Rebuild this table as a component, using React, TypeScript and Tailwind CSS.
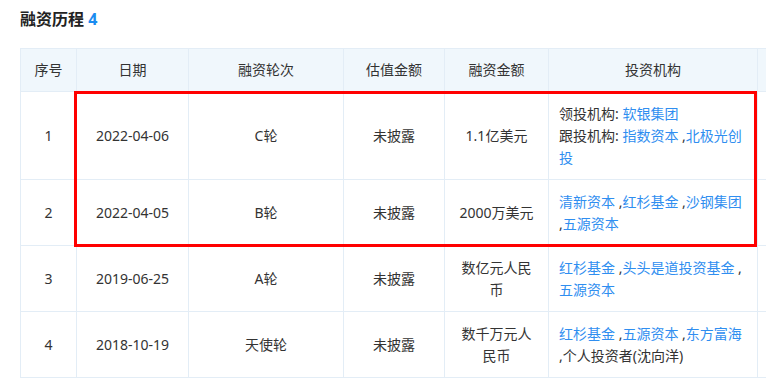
import React from "react";

type Inv = { text: string; link: boolean };

const Link = ({ children }: { children: React.ReactNode }) => (
  <span className="text-[#2f8ef0]">{children}</span>
);

const list = (items: Inv[]) =>
  items.map((it, i) => (
    <React.Fragment key={i}>
      {i > 0 ? " ," : ""}
      {it.link ? <Link>{it.text}</Link> : <span>{it.text}</span>}
    </React.Fragment>
  ));

const data = [
  {
    no: "1",
    date: "2022-04-06",
    round: "C轮",
    val: "未披露",
    amount: "1.1亿美元",
    inv: (
      <>
        <div>
          领投机构: <Link>软银集团</Link>
        </div>
        <div>
          跟投机构: {list([
            { text: "指数资本", link: true },
            { text: "北极光创投", link: true },
          ])}
        </div>
      </>
    ),
  },
  {
    no: "2",
    date: "2022-04-05",
    round: "B轮",
    val: "未披露",
    amount: "2000万美元",
    inv: list([
      { text: "清新资本", link: true },
      { text: "红杉基金", link: true },
      { text: "沙钢集团", link: true },
      { text: "五源资本", link: true },
    ]),
  },
  {
    no: "3",
    date: "2019-06-25",
    round: "A轮",
    val: "未披露",
    amount: "数亿元人民币",
    inv: list([
      { text: "红杉基金", link: true },
      { text: "头头是道投资基金", link: true },
      { text: "五源资本", link: true },
    ]),
  },
  {
    no: "4",
    date: "2018-10-19",
    round: "天使轮",
    val: "未披露",
    amount: "数千万元人民币",
    inv: list([
      { text: "红杉基金", link: true },
      { text: "五源资本", link: true },
      { text: "东方富海", link: true },
      { text: "个人投资者(沈向洋)", link: false },
    ]),
  },
];

export default function App() {
  const td =
    "border border-[#e3edf6] py-[10.5px] px-[10px] text-center align-middle";
  const th =
    "border border-[#e3edf6] py-[10px] px-[10px] text-center font-normal";
  return (
    <div
      className="w-[766px] h-[387px] overflow-hidden bg-white text-[#333] text-[14px] leading-[22px]"
      style={{ fontFamily: '"Noto Sans", "Noto Sans CJK SC", sans-serif' }}
    >
      <div className="pl-[20px] pt-[7px]">
        <div className="h-[24px] leading-[24px] text-[16px] font-bold text-[#222] mb-[17px]">
          融资历程 <span className="text-[#1b8cf0]">4</span>
        </div>
        <div className="relative">
          <table className="table-fixed border-collapse w-[857px]">
            <colgroup>
              <col className="w-[56px]" />
              <col className="w-[112px]" />
              <col className="w-[155px]" />
              <col className="w-[101px]" />
              <col className="w-[104px]" />
              <col className="w-[209px]" />
              <col className="w-[120px]" />
            </colgroup>
            <thead>
              <tr className="bg-[#f0f7fc]">
                <th className={th}>序号</th>
                <th className={th}>日期</th>
                <th className={th}>融资轮次</th>
                <th className={th}>估值金额</th>
                <th className={th}>融资金额</th>
                <th className={th}>投资机构</th>
                <th className={th}></th>
              </tr>
            </thead>
            <tbody>
              {data.map((r) => (
                <tr key={r.no}>
                  <td className={td}>{r.no}</td>
                  <td className={td}>{r.date}</td>
                  <td className={td}>{r.round}</td>
                  <td className={td}>{r.val}</td>
                  <td className={td}>{r.amount}</td>
                  <td className="border border-[#e3edf6] py-[10.5px] px-[10px] text-left align-middle">
                    {r.inv}
                  </td>
                  <td className={td}></td>
                </tr>
              ))}
            </tbody>
          </table>
          <div className="absolute left-[54px] top-[43px] w-[683px] h-[156px] border-[3px] border-[#ff0000] pointer-events-none" />
        </div>
      </div>
    </div>
  );
}
